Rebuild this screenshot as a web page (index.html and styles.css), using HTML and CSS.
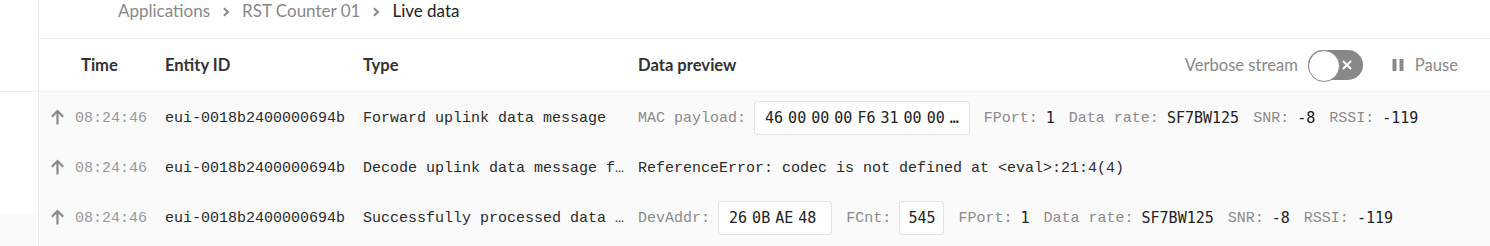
FILE: index.html
```html
<!DOCTYPE html>
<html>
<head>
<meta charset="utf-8">
<link rel="stylesheet" href="styles.css">
</head>
<body>
<div class="page">
  <aside class="side">
    <div class="side-top"></div>
    <div class="side-mid"></div>
    <div class="side-rest"></div>
  </aside>
  <main class="main">
    <nav class="crumbs">
      <span class="crumb">Applications</span>
      <svg class="chev" width="8" height="10" viewBox="0 0 8 10"><path d="M1.8 1.3 L6 5 L1.8 8.7" fill="none" stroke="#888" stroke-width="2"/></svg>
      <span class="crumb">RST Counter 01</span>
      <svg class="chev" width="8" height="10" viewBox="0 0 8 10"><path d="M1.8 1.3 L6 5 L1.8 8.7" fill="none" stroke="#888" stroke-width="2"/></svg>
      <span class="crumb current">Live data</span>
    </nav>
    <div class="grid head">
      <div class="h-time">Time</div>
      <div>Entity ID</div>
      <div>Type</div>
      <div class="h-data">
        <span>Data preview</span>
        <div class="controls">
          <span class="ctl-label">Verbose stream</span>
          <span class="toggle">
            <svg class="toggle-x" width="12" height="12" viewBox="0 0 12 12"><path d="M2 2 L10 10 M10 2 L2 10" stroke="#fff" stroke-width="2"/></svg>
          </span>
          <span class="pause">
            <svg width="12" height="12" viewBox="0 0 12 12"><rect x="0.5" y="0" width="4" height="12" fill="#888"/><rect x="7.5" y="0" width="4" height="12" fill="#888"/></svg>
            <span class="ctl-label">Pause</span>
          </span>
        </div>
      </div>
    </div>
    <div class="rows">
      <div class="grid row">
        <div class="c-time"><svg class="up" width="15" height="16" viewBox="0 0 15 16"><path d="M7.5 15.5 V2 M1.8 7.8 L7.5 2 L13.2 7.8" fill="none" stroke="#888" stroke-width="2.2"/></svg><span>08:24:46</span></div>
        <div class="c-id">eui-0018b2400000694b</div>
        <div class="c-type">Forward uplink data message</div>
        <div class="c-data">
          <span class="item"><span class="lbl">MAC payload:</span><span class="box val bytes">46 00 00 00 F6 31 00 00 …</span></span>
          <span class="item"><span class="lbl">FPort:</span><span class="val">1</span></span>
          <span class="item"><span class="lbl">Data rate:</span><span class="val">SF7BW125</span></span>
          <span class="item"><span class="lbl">SNR:</span><span class="val">-8</span></span>
          <span class="item"><span class="lbl">RSSI:</span><span class="val">-119</span></span>
        </div>
      </div>
      <div class="grid row">
        <div class="c-time"><svg class="up" width="15" height="16" viewBox="0 0 15 16"><path d="M7.5 15.5 V2 M1.8 7.8 L7.5 2 L13.2 7.8" fill="none" stroke="#888" stroke-width="2.2"/></svg><span>08:24:46</span></div>
        <div class="c-id">eui-0018b2400000694b</div>
        <div class="c-type">Decode uplink data message failure</div>
        <div class="c-data"><span class="err">ReferenceError: codec is not defined at &lt;eval&gt;:21:4(4)</span></div>
      </div>
      <div class="grid row">
        <div class="c-time"><svg class="up" width="15" height="16" viewBox="0 0 15 16"><path d="M7.5 15.5 V2 M1.8 7.8 L7.5 2 L13.2 7.8" fill="none" stroke="#888" stroke-width="2.2"/></svg><span>08:24:46</span></div>
        <div class="c-id">eui-0018b2400000694b</div>
        <div class="c-type">Successfully processed data message</div>
        <div class="c-data">
          <span class="item"><span class="lbl">DevAddr:</span><span class="box val bytes addr">26 0B AE 48</span></span>
          <span class="item"><span class="lbl">FCnt:</span><span class="box val num">545</span></span>
          <span class="item"><span class="lbl">FPort:</span><span class="val">1</span></span>
          <span class="item"><span class="lbl">Data rate:</span><span class="val">SF7BW125</span></span>
          <span class="item"><span class="lbl">SNR:</span><span class="val">-8</span></span>
          <span class="item"><span class="lbl">RSSI:</span><span class="val">-119</span></span>
        </div>
      </div>
    </div>
  </main>
</div>
</body>
</html>
```

FILE: styles.css
```css
* { box-sizing: border-box; }
html, body { margin: 0; padding: 0; }
body {
  width: 1490px;
  height: 246px;
  overflow: hidden;
  background: #fafafa;
  font-family: Lato, "Open Sans", sans-serif;
  color: #222;
}
.page {
  display: flex;
  height: 246px;
}
.side {
  width: 39px;
  flex: none;
  display: flex;
  flex-direction: column;
  border-right: 1px solid #ececec;
}
.side-top {
  height: 92px;
  background: #fff;
  border-bottom: 1px solid #ececec;
}
.side-mid {
  height: 121px;
  background: #fff;
}
.side-rest {
  flex: 1;
  background: #fafafa;
}
.main {
  flex: 1;
  display: flex;
  flex-direction: column;
  min-width: 0;
}
.crumbs {
  height: 39px;
  background: #fff;
  border-bottom: 1px solid #ececec;
  display: flex;
  align-items: flex-start;
  padding-left: 79px;
  font-size: 17px;
  line-height: 22px;
  gap: 12px;
}
.crumb { color: #888; }
.crumb.current { color: #222; }
.chev { margin-top: 7px; }
.grid {
  display: grid;
  grid-template-columns: 115px 198px 275px 1fr;
  padding-left: 11px;
  padding-right: 32px;
}
.head {
  height: 53px;
  background: #fff;
  border-bottom: 1px solid #ececec;
  align-items: center;
  font-weight: 700;
  font-size: 16.6px;
  color: #333;
}
.h-time { padding-left: 31px; }
.h-data {
  display: flex;
  align-items: center;
  justify-content: space-between;
}
.controls {
  display: flex;
  align-items: center;
  font-weight: 400;
}
.ctl-label {
  color: #888;
  font-size: 16.6px;
}
.toggle {
  position: relative;
  width: 55px;
  height: 30px;
  border-radius: 15px;
  background: #888;
  margin-left: 10px;
  margin-right: 29px;
  display: flex;
  align-items: center;
  justify-content: flex-end;
  padding-right: 10px;
}
.toggle::before {
  content: "";
  position: absolute;
  left: 0;
  top: 0;
  width: 30px;
  height: 30px;
  border-radius: 50%;
  background: #fff;
  border: 1px solid #888;
}
.pause {
  display: flex;
  align-items: center;
  gap: 11px;
}
.rows {
  flex: 1;
  background: #fafafa;
  padding-top: 1px;
}
.row {
  height: 50px;
  align-items: center;
  font-family: "Liberation Mono", monospace;
  font-size: 15px;
  color: #2a2a2a;
}
.c-time {
  display: flex;
  align-items: center;
  gap: 10px;
  color: #999;
}
.up { margin-top: -2px; }
.c-type {
  padding-right: 10px;
  white-space: nowrap;
  overflow: hidden;
  text-overflow: ellipsis;
}
.c-data {
  display: flex;
  align-items: center;
  gap: 14px;
  white-space: nowrap;
}
.item {
  display: flex;
  align-items: center;
  gap: 8px;
}
.lbl { color: #8a8a8a; }
.val {
  font-family: "DejaVu Sans Mono", monospace;
  font-size: 15px;
  color: #222;
}
.bytes { word-spacing: -4px; }
.box {
  height: 34px;
  display: inline-flex;
  align-items: center;
  padding: 0 10px;
  background: #fff;
  border: 1px solid #e2e2e2;
  border-radius: 3px;
}
.box.addr { padding-right: 15px; }
.box.num { padding: 0 8px; }
.err { color: #2a2a2a; }
```
